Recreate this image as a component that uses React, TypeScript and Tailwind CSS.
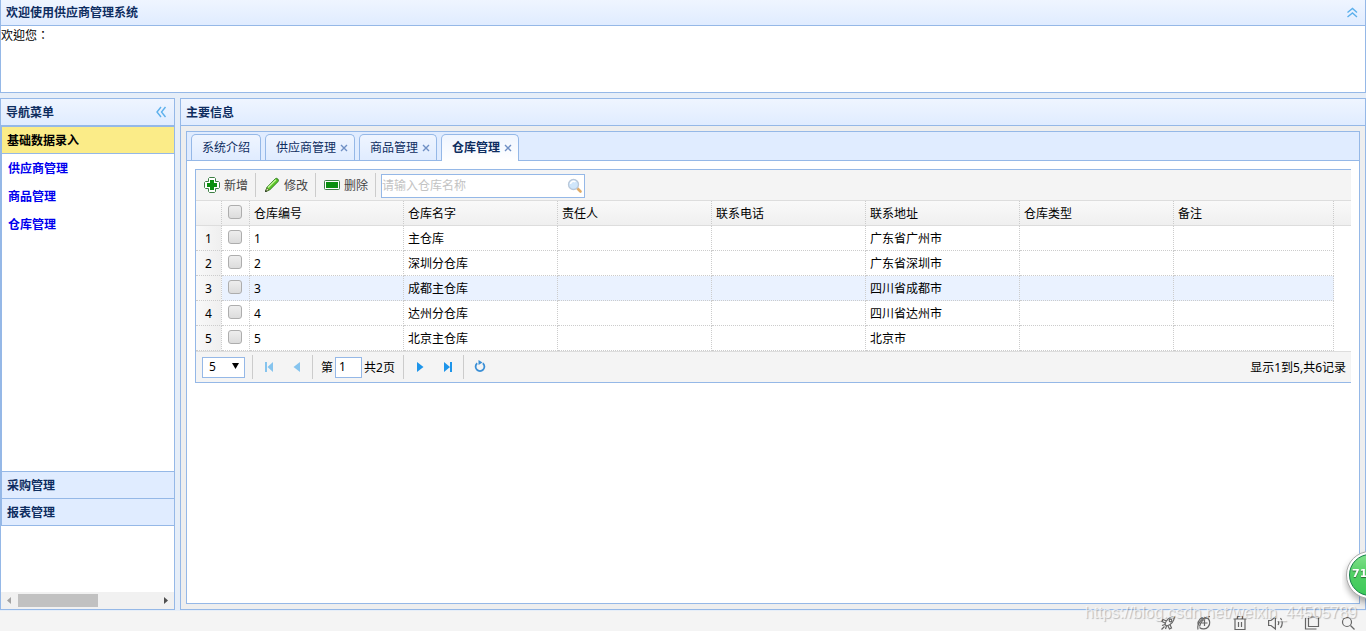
import React from "react";

const columns = ["仓库编号", "仓库名字", "责任人", "联系电话", "联系地址", "仓库类型", "备注"];

const rows = [
  ["1", "主仓库", "", "", "广东省广州市", "", ""],
  ["2", "深圳分仓库", "", "", "广东省深圳市", "", ""],
  ["3", "成都主仓库", "", "", "四川省成都市", "", ""],
  ["4", "达州分仓库", "", "", "四川省达州市", "", ""],
  ["5", "北京主仓库", "", "", "北京市", "", ""],
];

const tabs = [
  { title: "系统介绍", closable: false, active: false },
  { title: "供应商管理", closable: true, active: false },
  { title: "商品管理", closable: true, active: false },
  { title: "仓库管理", closable: true, active: true },
];

function Chevrons({ up = false }: { up?: boolean }) {
  return (
    <svg width="12" height="12" viewBox="0 0 12 12" fill="none" stroke="#5cb0ec" strokeWidth="1.4">
      {up ? <path d="M1.500 5.500 6.500 1.500l4.500 4M1.500 10 6.500 6l4.500 4" /> : <path d="M6 1 2 6l4 5M10.500 1l-4 5 4 5" />}
    </svg>
  );
}

function AddIcon() {
  return (
    <svg width="16" height="16" viewBox="0 0 16 16">
      <path
        d="M5.500.5h5l1 1v3h3l1 1v5l-1 1h-3v3l-1 1h-5l-1-1v-3h-3l-1-1v-5l1-1h3v-3z"
        fill="#fff"
        stroke="#3d7f45"
      />
      <path d="M6 3h4v3h3v4h-3v3H6v-3H3V6h3z" fill="#0a8f0f" />
    </svg>
  );
}

function PencilIcon() {
  return (
    <svg width="16" height="16" viewBox="0 0 16 16">
      <path d="M1.500 14.500 3 10.300 11.300 1.800Q12.600.8 13.800 2T14 4.600L5.600 13z" fill="#5cc726" stroke="#2c7a1e" />
      <path d="M4 10.500 11.800 2.800" stroke="#c8f5a0" strokeWidth="1.400" />
      <path d="M1.500 14.500 2.800 11 5 13z" fill="#f3ecc0" stroke="#4e6e2e" strokeWidth=".8" />
      <path d="m1 15 .8-2 1.300 1.200z" fill="#222" />
    </svg>
  );
}

function RemoveIcon() {
  return (
    <svg width="16" height="16" viewBox="0 0 16 16">
      <rect x=".5" y="3.500" width="15" height="9" rx="1" fill="#fff" stroke="#3d7f45" />
      <rect x="2" y="5" width="12" height="6" fill="#0a8f0f" />
    </svg>
  );
}

function LensIcon() {
  return (
    <svg width="16" height="16" viewBox="0 0 16 16">
      <path d="m10.500 10.500 3 3" stroke="#e0ab66" strokeWidth="2.600" strokeLinecap="round" />
      <circle cx="6.500" cy="6.500" r="5" fill="#cfe6fb" stroke="#b9c8da" strokeWidth="1.300" />
      <path d="M3.500 6A3 3 0 0 1 8.500 4" stroke="#fff" strokeWidth="1.500" fill="none" />
    </svg>
  );
}

function PagerIcon({ kind }: { kind: "first" | "prev" | "next" | "last" | "load" }) {
  return (
    <svg width="16" height="16" viewBox="0 0 16 16">
      {kind === "first" && <path d="M4 3h2v10H4zM12 3v10L6.500 8z" fill="#86c4ee" />}
      {kind === "prev" && <path d="M11 3v10L4.500 8z" fill="#86c4ee" />}
      {kind === "next" && <path d="M5 3v10l6.500-5z" fill="#1e95ea" />}
      {kind === "last" && <path d="M10 3h2v10h-2zM4 3v10l6-5z" fill="#1e95ea" />}
      {kind === "load" && (
        <>
          <path d="M5.200 4.300A4.400 4.400 0 1 0 10.800 4.300" fill="none" stroke="#3a8fd6" strokeWidth="1.800" />
          <path d="M6.500 1 10.500 3.500 6.500 6z" fill="#3a8fd6" />
        </>
      )}
    </svg>
  );
}

function Separator() {
  return <span className="h-6 w-px bg-[#ccc]" />;
}

function GridCheck({ label }: { label: string }) {
  return (
    <input
      type="checkbox"
      aria-label={label}
      className="ml-1.5 block size-3.5 appearance-none rounded-[3px] border border-[#adadad] bg-linear-to-b from-[#eee] to-[#dcdcdc] checked:bg-[#6a9fe0]"
    />
  );
}

function StatusIcon({ label, children }: { label: string; children: React.ReactNode }) {
  return (
    <button type="button" aria-label={label}>
      <svg width="16" height="16" viewBox="0 0 16 16" fill="none" stroke="#666" strokeWidth="1.200">
        {children}
      </svg>
    </button>
  );
}

export default function App() {
  return (
    <div className="flex min-h-screen flex-col bg-[#e6eef8] font-['Noto_Sans','Noto_Sans_CJK_SC',sans-serif] text-xs leading-4 text-black">
      <header className="border-x border-b border-[#95b8e7] bg-white">
        <div className="flex h-[26px] items-center justify-between border-b border-[#95b8e7] bg-linear-to-b from-[#eff5ff] to-[#e0ecff] pr-[7px] pl-[5px]">
          <h1 className="pt-px font-bold text-[#0e2d5f]">欢迎使用供应商管理系统</h1>
          <button type="button" aria-label="收起"><Chevrons up /></button>
        </div>
        <p className="h-[66px] pt-px font-['Noto_Sans_CJK_TC',sans-serif]">欢迎您：</p>
      </header>

      <div className="flex grow gap-[5px] pt-[5px]">
        <aside className="flex w-[175px] shrink-0 flex-col border border-[#95b8e7] bg-white">
          <div className="flex h-[27px] shrink-0 items-center justify-between border-b border-[#95b8e7] bg-linear-to-b from-[#eff5ff] to-[#e0ecff] pr-[7px] pl-[5px]">
            <h2 className="pt-0.5 font-bold text-[#0e2d5f]">导航菜单</h2>
            <button type="button" aria-label="折叠"><Chevrons /></button>
          </div>
          <nav className="flex h-[400px] shrink-0 flex-col border-y border-l border-[#95b8e7] font-bold text-[#0e2d5f]">
            <button type="button" className="h-[27px] border-b border-[#95b8e7] bg-[#fbec88] pt-0.5 pl-[5px] text-left text-black">基础数据录入</button>
            <div className="flex grow flex-col gap-3 px-1.5 pt-[7px] text-[#0000ee]">
              <a href="#supplier">供应商管理</a>
              <a href="#goods">商品管理</a>
              <a href="#warehouse">仓库管理</a>
            </div>
            <button type="button" className="h-[27px] border-t border-[#95b8e7] bg-[#e0ecff] pt-0.5 pl-[5px] text-left">采购管理</button>
            <button type="button" className="h-[27px] border-t border-[#95b8e7] bg-[#e0ecff] pt-0.5 pl-[5px] text-left">报表管理</button>
          </nav>
          <div className="grow" />
          <div className="flex h-[17px] items-center bg-[#f1f1f1]">
            <svg width="17" height="17" viewBox="0 0 17 17"><path d="M10 5v7L6 8.500z" fill="#a3a3a3" /></svg>
            <div className="h-[13px] w-20 bg-[#c1c1c1]" />
            <svg className="ml-auto" width="17" height="17" viewBox="0 0 17 17"><path d="M7 5v7l4-3.500z" fill="#505050" /></svg>
          </div>
        </aside>

        <main className="flex min-w-0 grow flex-col border border-[#95b8e7] bg-[#eee]">
          <h2 className="flex h-[27px] items-center border-b border-[#95b8e7] bg-linear-to-b from-[#eff5ff] to-[#e0ecff] pt-0.5 pl-[5px] font-bold text-[#0e2d5f]">主要信息</h2>
          <div className="m-[5px] flex grow flex-col border border-[#95b8e7] bg-white">
            <div className="flex h-[29px] items-end gap-1 border-b border-[#95b8e7] bg-[#e0ecff] px-1" role="tablist">
              {tabs.map((tab) => (
                <div
                  key={tab.title}
                  className={
                    tab.active
                      ? "-mb-px flex h-[27px] items-center rounded-t-[5px] border border-b-0 border-[#95b8e7] bg-linear-to-b from-[#eff5ff] to-white pr-1.5 pl-2.5 font-bold text-[#0e2d5f]"
                      : "flex h-[26px] items-center rounded-t-[5px] border border-b-0 border-[#95b8e7] bg-linear-to-b from-[#eff5ff] to-[#e0ecff] pr-1.5 pl-2.5 text-[#0e2d5f]"
                  }
                >
                  <button type="button" role="tab" aria-selected={tab.active} className={tab.closable ? "" : "pr-1"}>{tab.title}</button>
                  {tab.closable && (
                    <button type="button" aria-label="关闭" className="pl-1">
                      <svg width="8" height="8" viewBox="0 0 8 8"><path d="m1 1 6 6M7 1 1 7" stroke="#6f8fc4" strokeWidth="1.400" /></svg>
                    </button>
                  )}
                </div>
              ))}
            </div>

            <section className="m-2 border-y border-l border-[#95b8e7]">
              <div className="flex h-[31px] items-center border-b border-[#ddd] bg-[#f4f4f4] text-[#444]">
                <button type="button" className="flex w-[59px] items-center gap-1 pl-2"><AddIcon /><span className="pt-0.5">新增</span></button>
                <Separator />
                <button type="button" className="flex w-[59px] items-center gap-1 pl-2"><PencilIcon /><span className="pt-0.5">修改</span></button>
                <Separator />
                <button type="button" className="flex w-[59px] items-center gap-1 pl-2"><RemoveIcon /><span className="pt-0.5">删除</span></button>
                <Separator />
                <label className="mt-0.5 ml-[5px] flex h-6 w-[204px] items-center border border-[#95b8e7] bg-white pr-px">
                  <input type="text" aria-label="仓库名称" placeholder="请输入仓库名称" className="min-w-0 grow outline-none placeholder:text-[#c3c3c3]" />
                  <LensIcon />
                </label>
              </div>

              <table className="w-full table-fixed border-separate border-spacing-0 text-left">
                <colgroup>
                  <col className="w-[26px]" />
                  <col className="w-7" />
                  <col className="w-[154px]" />
                  <col className="w-[154px]" />
                  <col className="w-[154px]" />
                  <col className="w-[154px]" />
                  <col className="w-[154px]" />
                  <col className="w-[154px]" />
                  <col className="w-40" />
                  <col />
                </colgroup>
                <thead>
                  <tr className="h-[25px] bg-linear-to-b from-[#f9f9f9] to-[#efefef]">
                    <th className="border-r border-b border-r-[#ccc] border-b-[#ddd] [border-right-style:dotted]" />
                    <th className="border-r border-b border-r-[#ccc] border-b-[#ddd] pb-0.5 [border-right-style:dotted]"><GridCheck label="全选" /></th>
                    {columns.map((name) => (
                      <th key={name} className="border-r border-b border-r-[#ccc] border-b-[#ddd] px-1 pt-0.5 font-normal [border-right-style:dotted]">{name}</th>
                    ))}
                    <th className="border-b border-[#ddd]" />
                  </tr>
                </thead>
                <tbody>
                  {rows.map((row, i) => (
                    <tr key={row[0]} className="h-[25px]">
                      <td className="border-r border-b border-dotted border-[#ccc] bg-linear-to-r from-[#f9f9f9] to-[#efefef] pt-0.5 text-center">{i + 1}</td>
                      <td className={i === 2 ? "border-r border-b border-dotted border-[#ccc] bg-[#eaf2ff] pb-0.5" : "border-r border-b border-dotted border-[#ccc] pb-0.5"}>
                        <GridCheck label={row[1]} />
                      </td>
                      {row.map((cell, j) => (
                        <td key={j} className={i === 2 ? "border-r border-b border-dotted border-[#ccc] bg-[#eaf2ff] px-1 pt-0.5" : "border-r border-b border-dotted border-[#ccc] px-1 pt-0.5"}>{cell}</td>
                      ))}
                      <td />
                    </tr>
                  ))}
                </tbody>
              </table>

              <div className="flex h-[31px] items-center border-t border-[#ddd] bg-[#f4f4f4] pr-[5px] pl-1.5">
                <span className="relative">
                  <select aria-label="每页记录数" className="block h-[21px] w-[43px] appearance-none border border-[#95b8e7] bg-white pl-1.5">
                    <option>5</option>
                    <option>10</option>
                  </select>
                  <svg className="pointer-events-none absolute top-1.5 right-1.5" width="7" height="6" viewBox="0 0 7 6"><path d="M0 0h7L3.500 6z" fill="#000" /></svg>
                </span>
                <span className="ml-[7px] flex items-center"><Separator /></span>
                <button type="button" aria-label="首页" className="ml-2"><PagerIcon kind="first" /></button>
                <button type="button" aria-label="上一页" className="ml-3"><PagerIcon kind="prev" /></button>
                <span className="ml-[7px] flex items-center"><Separator /></span>
                <label className="ml-2 flex items-center gap-0.5">
                  <span className="pt-0.5">第</span>
                  <input type="text" defaultValue="1" className="h-[21px] w-[27px] border border-[#95b8e7] bg-white pb-0.5 pl-[3px] outline-none" />
                </label>
                <span className="ml-0.5 pt-0.5">共2页</span>
                <span className="ml-2 flex items-center"><Separator /></span>
                <button type="button" aria-label="下一页" className="ml-2"><PagerIcon kind="next" /></button>
                <button type="button" aria-label="末页" className="ml-3"><PagerIcon kind="last" /></button>
                <span className="ml-[7px] flex items-center"><Separator /></span>
                <button type="button" aria-label="刷新" className="ml-2"><PagerIcon kind="load" /></button>
                <span className="ml-auto pt-0.5">显示1到5,共6记录</span>
              </div>
            </section>
          </div>
        </main>
      </div>

      <footer className="relative mt-px flex h-5 items-center justify-end gap-5 bg-[#f4f4f4] pt-[3px] pr-[10px]">
        <StatusIcon label="加速">
          <path d="M5 9.500C6 5 9.500 2 14.500 1.500 14 6.500 11 10 6.500 11zM6.500 6 3 4.500 2 6.500l3 1.500M10 9.500l1.500 3.500-2 1L8 11M5 9.500 2 10.500M6.500 11l-1 3M4.500 11.500 1.500 14.500" />
          <circle cx="10.500" cy="5.500" r="1.300" />
        </StatusIcon>
        <StatusIcon label="浏览器模式">
          <path d="M2 14.500C.5 9 6 2 14 1.500M3.500 11.500C4.500 7 8 3.500 12 3M8.500 5v6M5.500 8h6M3.500 12.500a6.200 6.200 0 1 0 8-9.500M2 9.500A6.300 6.300 0 0 1 9 2.500" />
        </StatusIcon>
        <StatusIcon label="清理">
          <path d="M1.500 4h13M5.500 4V1.500h5V4M3 4v10.500h10V4M6.500 7v5M9.500 7v5" />
        </StatusIcon>
        <StatusIcon label="声音">
          <path d="M.600 5.500H3L7.400 2v12L3 10.500H.600zM10 6q1.500 2 0 4M12.500 3q3.500 5 0 10" />
        </StatusIcon>
        <StatusIcon label="窗口">
          <path d="M4.500 2h10v9.500h-10zM1.500 3v11h11" />
        </StatusIcon>
        <StatusIcon label="搜索">
          <circle cx="7" cy="7" r="4.500" />
          <path d="m10.500 10.500 4 4" />
        </StatusIcon>
        <span className="pointer-events-none absolute -top-2 right-[9px] font-['Liberation_Sans',sans-serif] text-base leading-5 text-white/70 [text-shadow:1px_1px_1px_rgba(0,0,0,0.25)]">
          https://blog.csdn.net/weixin_44505789
        </span>
      </footer>

      <div className="fixed right-0 bottom-5 h-[62px] w-6 overflow-hidden">
        <button type="button" className="mt-0.5 ml-1 flex size-12 items-center rounded-full border border-[#aaa] bg-white p-0.5 shadow-[0_4px_6px_rgba(0,0,0,0.3)]">
          <span className="flex size-full items-center rounded-full border border-[#16804a] bg-linear-to-b from-[#7fe08a] via-[#4fcf63] to-[#3cc95a] pb-0.5 pl-0.5 font-['DejaVu_Sans',sans-serif] text-[11px] font-bold text-white [text-shadow:0_1px_1px_rgba(0,0,0,0.5)]">71</span>
        </button>
      </div>
    </div>
  );
}
